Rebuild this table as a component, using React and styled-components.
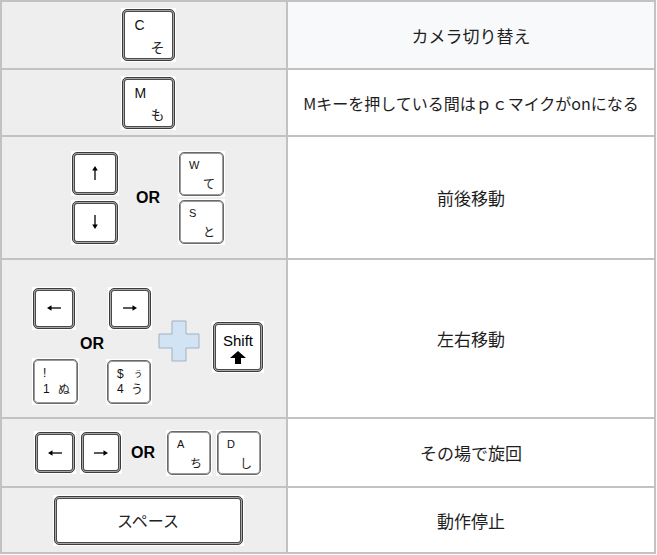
import React from 'react';
import styled, { createGlobalStyle } from 'styled-components';

const GlobalStyle = createGlobalStyle`
  body {
    margin: 0;
    background: #ffffff;
    font-family: "Liberation Sans", Arial, sans-serif;
  }
`;

const Arrow = ({ dir = 'up' }) => {
  const rot = { up: 0, right: 90, down: 180, left: 270 }[dir];
  return (
    <svg width="16" height="16" viewBox="0 0 16 16">
      <g transform={`rotate(${rot} 8 8)`}>
        <line x1="8" y1="15" x2="8" y2="4" stroke="#000" strokeWidth="1.3" />
        <polygon points="5.2,5.5 8,1 10.8,5.5" fill="#000" />
      </g>
    </svg>
  );
};

const ShiftArrow = () => (
  <svg width="16" height="13" viewBox="0 0 16 13">
    <polygon points="8,0 16,7 11,7 11,13 5,13 5,7 0,7" fill="#000" />
  </svg>
);

const Plus = () => (
  <svg width="42" height="42" viewBox="0 0 42 42">
    <polygon
      points="14,1 28,1 28,14 41,14 41,28 28,28 28,41 14,41 14,28 1,28 1,14 14,14"
      fill="#d2e3f4"
      stroke="#9fb0c2"
      strokeWidth="1"
    />
  </svg>
);

const Key = ({ w, h, soft, children }) => (
  <Frame w={w} h={h}>
    <Cap soft={soft}>{children}</Cap>
  </Frame>
);

const ArrowKey = ({ w, h, dir }) => (
  <Key w={w} h={h}>
    <Center>
      <Arrow dir={dir} />
    </Center>
  </Key>
);

const LetterKey = ({ w, h, top, bottom, soft, small }) => (
  <Key w={w} h={h} soft={soft}>
    <Letters small={small}>
      <TopLabel small={small}>{top}</TopLabel>
      <BottomLabel small={small}>{bottom}</BottomLabel>
    </Letters>
  </Key>
);

const App = () => {
  return (
    <>
      <GlobalStyle />
      <Table>
        <tbody>
          <Row h={68}>
            <KeyCell>
              <Line>
                <LetterKey w={55} h={54} top="C" bottom="そ" />
              </Line>
            </KeyCell>
            <TextCell tint>カメラ切り替え</TextCell>
          </Row>
          <Row h={67}>
            <KeyCell>
              <Line>
                <LetterKey w={55} h={54} top="M" bottom="も" />
              </Line>
            </KeyCell>
            <TextCell narrow>Mキーを押している間はｐｃマイクがonになる</TextCell>
          </Row>
          <Row h={123}>
            <KeyCell>
              <Line>
                <Stack gap={4}>
                  <ArrowKey w={48} h={45} dir="up" />
                  <ArrowKey w={48} h={45} dir="down" />
                </Stack>
                <Or>OR</Or>
                <Stack gap={2}>
                  <LetterKey w={47} h={46} top="W" bottom="て" soft small />
                  <LetterKey w={47} h={46} top="S" bottom="と" soft small />
                </Stack>
              </Line>
            </KeyCell>
            <TextCell>前後移動</TextCell>
          </Row>
          <Row h={159}>
            <KeyCell shift>
              <Combo>
                <Cluster>
                  <Pair>
                    <ArrowKey w={44} h={43} dir="left" />
                    <ArrowKey w={44} h={43} dir="right" />
                  </Pair>
                  <MidOr>OR</MidOr>
                  <Pair>
                    <Key w={47} h={47} soft>
                      <NumGrid>
                        <Latin>!</Latin>
                        <span />
                        <Latin>1</Latin>
                        <span>ぬ</span>
                      </NumGrid>
                    </Key>
                    <Key w={46} h={46} soft>
                      <NumGrid>
                        <Latin>$</Latin>
                        <Tiny>ぅ</Tiny>
                        <Latin>4</Latin>
                        <span>う</span>
                      </NumGrid>
                    </Key>
                  </Pair>
                </Cluster>
                <PlusWrap>
                  <Plus />
                </PlusWrap>
                <ShiftWrap>
                  <Key w={52} h={52}>
                    <ShiftFace>
                      <span>Shift</span>
                      <ShiftArrow />
                    </ShiftFace>
                  </Key>
                </ShiftWrap>
              </Combo>
            </KeyCell>
            <TextCell>左右移動</TextCell>
          </Row>
          <Row h={69}>
            <KeyCell>
              <Line>
                <Group gap={4}>
                  <ArrowKey w={42} h={43} dir="left" />
                  <ArrowKey w={42} h={43} dir="right" />
                </Group>
                <SideOr>OR</SideOr>
                <Group gap={4}>
                  <LetterKey w={46} h={46} top="A" bottom="ち" soft small />
                  <LetterKey w={46} h={46} top="D" bottom="し" soft small />
                </Group>
              </Line>
            </KeyCell>
            <TextCell>その場で旋回</TextCell>
          </Row>
          <Row h={66}>
            <KeyCell>
              <Line>
                <Key w={191} h={51}>
                  <SpaceFace>スペース</SpaceFace>
                </Key>
              </Line>
            </KeyCell>
            <TextCell>動作停止</TextCell>
          </Row>
        </tbody>
      </Table>
    </>
  );
};

const Table = styled.table`
  width: 656px;
  border-collapse: collapse;
  table-layout: fixed;
  border: 2px solid #c2c2c2;
`;

const Row = styled.tr`
  height: ${(p) => p.h}px;
`;

const KeyCell = styled.td`
  width: 286px;
  box-sizing: border-box;
  padding: ${(p) => (p.shift ? '14px 0 0 8px' : '0 0 0 8px')};
  background: #eeeeee;
  border: 2px solid #c2c2c2;
  vertical-align: middle;
`;

const TextCell = styled.td`
  border: 2px solid #c2c2c2;
  background: ${(p) => (p.tint ? '#f8f9fb' : '#ffffff')};
  text-align: center;
  vertical-align: middle;
  font-family: "Noto Sans CJK JP", sans-serif;
  font-size: ${(p) => (p.narrow ? '16px' : '17px')};
  color: #1e1e1e;
`;

const Line = styled.div`
  display: flex;
  align-items: center;
  justify-content: center;
`;

const Stack = styled.div`
  display: flex;
  flex-direction: column;
  gap: ${(p) => p.gap}px;
`;

const Group = styled.div`
  display: flex;
  gap: ${(p) => p.gap}px;
`;

const Or = styled.span`
  font-weight: bold;
  font-size: 16px;
  color: #000;
  margin: 0 18px 0 17px;
`;

const SideOr = styled(Or)`
  margin: 0 11px 0 9px;
`;

const MidOr = styled(Or)`
  display: block;
  margin: 6px 0 6px 0;
  line-height: 16px;
  text-align: center;
`;

const Combo = styled.div`
  display: flex;
  align-items: flex-start;
  justify-content: center;
`;

const Cluster = styled.div`
  width: 120px;
  display: flex;
  flex-direction: column;
`;

const Pair = styled.div`
  display: flex;
  justify-content: space-between;
  align-items: flex-end;
`;

const PlusWrap = styled.div`
  margin: 33px 0 0 6px;
  line-height: 0;
`;

const ShiftWrap = styled.div`
  margin: 34px 0 0 12px;
`;

const Frame = styled.div`
  width: ${(p) => p.w}px;
  height: ${(p) => p.h}px;
  box-sizing: border-box;
  padding: 1px;
  background: #ffffff;
  flex: none;
`;

const Cap = styled.div`
  width: 100%;
  height: 100%;
  box-sizing: border-box;
  border-radius: 5px;
  background: #ffffff;
  border: 1px solid ${(p) => (p.soft ? '#6a6a6a' : '#3c3c3c')};
  box-shadow: ${(p) =>
    p.soft
      ? 'inset 0 0 0 1px #9a9a9a'
      : 'inset 0 0 0 1px #a8a8a8, inset 0 0 0 2px #4a4a4a'};
`;

const Center = styled.div`
  height: 100%;
  display: flex;
  align-items: center;
  justify-content: center;
`;

const Letters = styled.div`
  height: 100%;
  display: flex;
  flex-direction: column;
  justify-content: space-between;
  padding: ${(p) => (p.small ? '6px 8px 4px 9px' : '8px 9px 5px 12px')};
  box-sizing: border-box;
`;

const TopLabel = styled.span`
  align-self: flex-start;
  font-size: ${(p) => (p.small ? '11px' : '14px')};
  line-height: 1.1;
  color: #111;
`;

const BottomLabel = styled.span`
  align-self: flex-end;
  font-family: "Noto Sans CJK JP", sans-serif;
  font-size: ${(p) => (p.small ? '12px' : '14px')};
  line-height: 1.1;
  color: #222;
`;

const NumGrid = styled.div`
  height: 100%;
  box-sizing: border-box;
  padding: 6px 7px 6px 9px;
  display: grid;
  grid-template-columns: 1fr auto;
  align-content: space-between;
  font-family: "Noto Sans CJK JP", sans-serif;
  font-size: 12px;
  line-height: 1.2;
  color: #222;
`;

const Latin = styled.span`
  font-family: "Liberation Sans", Arial, sans-serif;
  font-size: 12px;
  color: #111;
`;

const Tiny = styled.span`
  font-size: 10px;
  text-align: right;
`;

const ShiftFace = styled.div`
  height: 100%;
  display: flex;
  flex-direction: column;
  align-items: center;
  justify-content: center;
  gap: 2px;
  font-size: 15px;
  color: #000;
  padding-top: 2px;
  box-sizing: border-box;
`;

const SpaceFace = styled.div`
  height: 100%;
  display: flex;
  align-items: center;
  justify-content: center;
  font-family: "Noto Sans CJK JP", sans-serif;
  font-size: 16px;
  color: #222;
`;

export default App;
